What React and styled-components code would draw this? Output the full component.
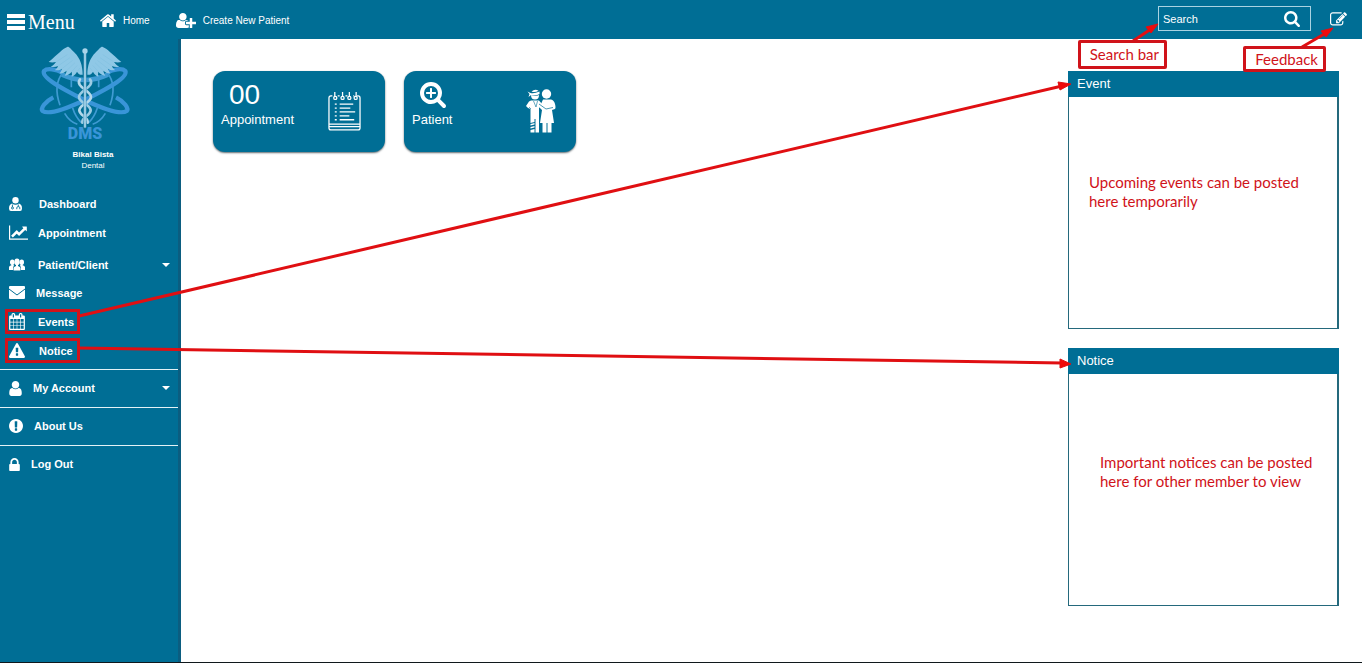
import React from "react";
import styled, { createGlobalStyle } from "styled-components";

const GlobalStyle = createGlobalStyle`
  *, *::before, *::after { box-sizing: border-box; }
  body {
    margin: 0;
    background: #fff;
    font-family: "Liberation Sans", Arial, sans-serif;
  }
`;

const brand = "#006e95";
const brandDark = "#0b5d80";
const red = "#d0131a";

/* ---------- icons ---------- */

const Glyph = styled.svg`
  display: block;
  flex: none;
  fill: currentColor;
`;

const paths = {
  home: "M1472 992v480q0 26-19 45t-45 19h-384v-384h-256v384h-384q-26 0-45-19t-19-45v-480q0-1 .5-3t.5-3l575-474 575 474q1 2 1 6zm223-69l-62 74q-8 9-21 11h-3q-13 0-21-7l-692-577-692 577q-12 8-24 7-13-2-21-11l-62-74q-8-10-7-23.5t11-21.5l719-599q32-26 76-26t76 26l244 204v-195q0-14 9-23t23-9h192q14 0 23 9t9 23v408l219 182q10 8 11 21.5t-7 23.5z",
  edit: "M888 1184l116-116-152-152-116 116v56h96v96h56zm440-720q-16-16-33 1l-350 350q-17 17-1 33t33-1l350-350q17-17 1-33zm80 594v190q0 119-84.5 203.5t-203.5 84.5h-832q-119 0-203.5-84.5t-84.5-203.5v-832q0-119 84.5-203.5t203.5-84.5h832q63 0 117 25 15 7 18 23 3 17-9 29l-49 49q-14 14-32 8-23-6-45-6h-832q-66 0-113 47t-47 113v832q0 66 47 113t113 47h832q66 0 113-47t47-113v-126q0-13 9-22l64-64q15-15 35-7t20 29zm-96-738l288 288-672 672h-288v-288zm444 132l-92 92-288-288 92-92q28-28 68-28t68 28l152 152q28 28 28 68t-28 68z",
  search: "M1216 832q0-185-131.5-316.5t-316.5-131.5-316.5 131.5-131.5 316.5 131.5 316.5 316.5 131.5 316.5-131.5 131.5-316.5zm512 832q0 52-38 90t-90 38q-54 0-90-38l-343-342q-179 124-399 124-143 0-273.5-55.5t-225-150-150-225-55.5-273.5 55.5-273.5 150-225 225-150 273.5-55.5 273.5 55.5 225 150 150 225 55.5 273.5q0 220-124 399l343 343q37 37 37 90z",
  plus: "M1088 800v64q0 13-9.5 22.5t-22.5 9.5h-224v224q0 13-9.5 22.5t-22.5 9.5h-64q-13 0-22.5-9.5t-9.5-22.5v-224h-224q-13 0-22.5-9.5t-9.5-22.5v-64q0-13 9.5-22.5t22.5-9.5h224v-224q0-13 9.5-22.5t22.5-9.5h64q13 0 22.5 9.5t9.5 22.5v224h224q13 0 22.5 9.5t9.5 22.5z",
  user: "M1536 1399q0 109-62.5 187t-150.5 78h-854q-88 0-150.5-78t-62.5-187q0-85 8.5-160.5t31.5-152 58.5-131 94-89 134.5-34.5q131 128 313 128t313-128q76 0 134.5 34.5t94 89 58.5 131 31.5 152 8.5 160.5zm-256-887q0 159-112.5 271.5t-271.5 112.5-271.5-112.5-112.5-271.5 112.5-271.5 271.5-112.5 271.5 112.5 112.5 271.5z",
  about: "M896 128q209 0 385.5 103t279.5 279.5 103 385.5-103 385.5-279.5 279.5-385.5 103-385.5-103-279.5-279.5-103-385.5 103-385.5 279.5-279.5 385.5-103zm128 1247v-190q0-14-9-23.5t-22-9.5h-192q-13 0-23 10t-10 23v190q0 13 10 23t23 10h192q13 0 22-9.5t9-23.5zm-2-344l18-621q0-12-10-18-10-8-24-8h-220q-14 0-24 8-10 6-10 18l17 621q0 10 10 17.5t24 7.5h185q14 0 23.5-7.5t10.5-17.5z",
  warning: "M1024 1375v-190q0-14-9.5-23.5t-22.5-9.5h-192q-13 0-22.5 9.5t-9.5 23.5v190q0 14 9.5 23.5t22.5 9.5h192q13 0 22.5-9.5t9.5-23.5zm-2-374l18-459q0-12-10-19-13-11-24-11h-220q-11 0-24 11-10 7-10 21l17 457q0 10 10 16.5t24 6.5h185q14 0 23.5-6.5t10.5-16.5zm-14-934l768 1408q35 63-2 126-17 29-46.5 46t-63.5 17h-1536q-34 0-63.5-17t-46.5-46q-37-63-2-126l768-1408q17-31 47-49t65-18 65 18 47 49z",
  lock: "M640 768h512v-192q0-106-75-181t-181-75-181 75-75 181v192zm832 96v576q0 40-28 68t-68 28h-960q-40 0-68-28t-28-68v-576q0-40 28-68t68-28h32v-192q0-184 132-316t316-132 316 132 132 316v192h32q40 0 68 28t28 68z",
  chart: "M2048 1536v128h-2048v-1536h128v1408h1920zm-128-1248v435q0 21-19.5 29.5t-35.5-7.5l-121-121-633 633q-10 10-23 10t-23-10l-233-233-416 416-192-192 585-585q10-10 23-10t23 10l233 233 464-464-121-121q-16-16-7.5-35.5t29.5-19.5h435q14 0 23 9t9 23z",
  userPlus: "M704 896q-159 0-271.5-112.5t-112.5-271.5 112.5-271.5 271.5-112.5 271.5 112.5 112.5 271.5-112.5 271.5-271.5 112.5zm960 128h352q13 0 22.5 9.5t9.5 22.5v192q0 13-9.5 22.5t-22.5 9.5h-352v352q0 13-9.5 22.5t-22.5 9.5h-192q-13 0-22.5-9.5t-9.5-22.5v-352h-352q-13 0-22.5-9.5t-9.5-22.5v-192q0-13 9.5-22.5t22.5-9.5h352v-352q0-13 9.5-22.5t22.5-9.5h192q13 0 22.5 9.5t9.5 22.5v352zm-736 224q0 52 38 90t90 38h256v238q-68 50-171 50h-874q-121 0-194-69t-73-190q0-53 3.5-103.5t14-109 26.5-108.5 43-97.5 62-81 85.5-53.5 111.5-20q19 0 39 17 79 61 154.5 91.5t164.5 30.5 164.5-30.5 154.5-91.5q20-17 39-17 132 0 217 96h-223q-52 0-90 38t-38 90v192z",
  calendar: "M192 1664h288v-288h-288v288zm352 0h320v-288h-320v288zm-352-352h288v-320h-288v320zm352 0h320v-320h-320v320zm-352-384h288v-288h-288v288zm736 736h320v-288h-320v288zm-384-736h320v-288h-320v288zm768 736h288v-288h-288v288zm-384-352h320v-320h-320v320zm-352-864v-288q0-13-9.5-22.5t-22.5-9.5h-64q-13 0-22.5 9.5t-9.5 22.5v288q0 13 9.5 22.5t22.5 9.5h64q13 0 22.5-9.5t9.5-22.5zm736 864h288v-320h-288v320zm-384-384h320v-288h-320v288zm384 0h288v-288h-288v288zm32-480v-288q0-13-9.5-22.5t-22.5-9.5h-64q-13 0-22.5 9.5t-9.5 22.5v288q0 13 9.5 22.5t22.5 9.5h64q13 0 22.5-9.5t9.5-22.5zm384-64v1280q0 52-38 90t-90 38h-1408q-52 0-90-38t-38-90v-1280q0-52 38-90t90-38h128v-96q0-66 47-113t113-47h64q66 0 113 47t47 113v96h384v-96q0-66 47-113t113-47h64q66 0 113 47t47 113v96h128q52 0 90 38t38 90z",
};

const Icon = ({ d, box, w, h }) => (
  <Glyph viewBox={box} width={w} height={h} aria-hidden="true">
    <path d={d} />
  </Glyph>
);

const DoctorIcon = () => (
  <Glyph viewBox="0 0 13 14" width="13" height="14" aria-hidden="true">
    <circle cx="6.5" cy="3.2" r="3.2" />
    <path d="M3 6.6Q6.500 9 10 6.600Q13 7.500 13 11.500Q13 14 11 14H2Q0 14 0 11.500Q0 7.500 3 6.600Z" />
    <g fill="none" stroke={brand} strokeWidth="0.9">
      <path d="M3.400 7.500V10M9.300 7.500V9.500M7.800 12.200V10.800Q7.800 9.600 9.300 9.600Q10.800 9.600 10.800 10.800V12.200" />
      <circle cx="3.500" cy="11" r="1" />
    </g>
  </Glyph>
);

const GroupIcon = () => (
  <Glyph viewBox="0 0 16 13" width="16" height="13" aria-hidden="true">
    <ellipse cx="3.300" cy="4.200" rx="2.300" ry="2.700" />
    <ellipse cx="12.700" cy="4.200" rx="2.300" ry="2.700" />
    <path d="M0 12V9.300Q0 8 2.400 7.300V6H4.200V7L5.200 7.500Q4.200 8.300 4.200 9.600V12Z" />
    <path d="M16 12V9.300Q16 8 13.600 7.300V6H11.800V7L10.800 7.500Q11.800 8.300 11.800 9.600V12Z" />
    <ellipse cx="8" cy="3.900" rx="2.600" ry="3.300" />
    <path d="M4.600 12.500V10Q4.600 8.900 7 8.100V6H9V8.100Q11.400 8.900 11.400 10V12.500Z" />
  </Glyph>
);

const EnvelopeIcon = () => (
  <Glyph viewBox="0 0 16 13" width="16" height="13" aria-hidden="true">
    <path d="M1 0H15Q16 0 16 1V12Q16 13 15 13H1Q0 13 0 12V1Q0 0 1 0Z" />
    <path d="M0 3L8 9L16 3" fill="none" stroke={brand} strokeWidth="1" />
  </Glyph>
);

const BarsIcon = () => (
  <Glyph viewBox="0 0 18 16" width="18" height="16" aria-hidden="true">
    <path d="M0 0h18v4H0zM0 6h18v4H0zM0 12h18v4H0z" />
  </Glyph>
);

const NotepadIcon = () => (
  <Glyph viewBox="0 0 34 40" width="33" height="39" aria-hidden="true">
    <g fill="none" stroke="currentColor" strokeWidth="1.300">
      <path d="M4.500 4H3Q1 4 1 6V37Q1 39 3 39H31Q33 39 33 37V6Q33 4 31 4H30M10 4H12M18 4H20M26 4H27" />
      <path d="M1 33H33M1 35.500H33" />
      <path d="M7 0V5M15 0V5M22 0V5M29 0V5" />
      <circle cx="7.500" cy="6" r="1.600" />
      <circle cx="15" cy="6" r="1.600" />
      <circle cx="22" cy="6" r="1.600" />
      <circle cx="28.500" cy="6" r="1.600" />
      <path d="M12 12.500H26M12 16.500H23M12 20.500H28M12 24.500H22M12 28.500H27" />
      <path d="M7 12.500H9M7 16.500H9M7 20.500H9M7 24.500H9M7 28.500H9" />
    </g>
  </Glyph>
);

const CoupleIcon = () => (
  <Glyph viewBox="0 0 30 44" width="30" height="44" aria-hidden="true">
    <path d="M5 6Q5 10.500 9 10.500Q13 10.500 13 6Q9 8 5 6Z" />
    <path d="M1.500 2.500L4.500 4Q8 5 13.500 2.500V5Q9 7.500 5 6L2.500 8L3.500 5Z" />
    <path d="M5.500 2.500Q9 -0.500 12.500 1.800Q9 4 5.500 2.500Z" />
    <path d="M5 11.500H13L16 15L18 17L16 20L13 18V43.500H9.500V30H8.500V33L4.500 34V20L2 19L0 17L3 12.500Z" />
    <path d="M4.500 35L8.500 34V35.500L4.500 36.500ZM4.500 38L8.500 37V38.500L4.500 39.500ZM4.500 41L8.500 40V43.500H4.500Z" />
    <path d="M7.500 12L10 18L11.500 12M5 20L3 18" fill="none" stroke={brand} strokeWidth="0.600" />
    <circle cx="20.500" cy="5" r="4.700" />
    <path d="M17 10.500H25Q28 11 29 15Q30 19 29 20L26 21L28 34H25.500V43.500H21.500V34H20.500V43.500H16.500V34H14L16 21L13 18L15 15Z" />
    <path d="M13 15L20 20L27 18.500" fill="none" stroke={brand} strokeWidth="0.700" />
  </Glyph>
);

const wing =
  "M158 104C158 76 150 54 134 38C124 28 118 20 113 20C98 26 84 42 56 66C64 68 70 68 78 66C72 74 68 78 62 80C70 82 78 81 84 78C82 85 78 88 74 90C82 92 90 90 96 86C94 93 92 97 88 100C97 101 104 97 110 92C109 98 107 103 104 107C114 105 120 101 125 95C126 101 126 105 125 110C134 106 138 101 141 95C146 103 152 106 158 104Z";

const ring =
  "M70 172C46 184 30 206 38 213C56 226 118 202 165 180C220 152 296 114 286 93C276 83 250 88 230 98";

const DmsLogo = () => (
  <Glyph viewBox="0 0 330 315" width="110" height="105" role="img" aria-label="DMS">
    <g fill="none" stroke="#3f9bd3" strokeWidth="5">
      <path d="M99 97Q68 135 90 196M231 97Q262 135 240 196" />
      <path d="M124 105V142M206 105V142" />
      <path d="M96 104Q165 136 234 104" strokeWidth="14" />
      <path d="M104 220Q118 244 142 253M226 220Q212 244 188 253" />
      <path d="M128 204Q136 230 154 248M202 204Q194 230 176 248" />
    </g>
    <g fill="none" stroke="#3995d8" strokeWidth="13">
      <path d={ring} />
      <path d={ring} transform="translate(328 0) scale(-1 1)" />
    </g>
    <path d={wing} fill="#8fc8e6" />
    <path d={wing} fill="#8fc8e6" transform="translate(330 0) scale(-1 1)" />
    <g fill="none" stroke="#7fbedf" strokeWidth="1.500">
      <path d="M78 66L112 44M84 78L120 53M96 86L128 61M110 92L135 68M125 95L142 76M141 95L150 84" />
      <path d="M252 66L218 44M246 78L210 53M234 86L202 61M220 92L195 68M205 95L188 76M189 95L180 84" />
    </g>
    <text x="165" y="297" textAnchor="middle" fontFamily="Roboto, Liberation Sans, sans-serif" fontWeight="900" fontSize="48" fill="#3995d8">DMS</text>
    <g fill="none" strokeLinecap="round">
      <path d="M150 118C134 140 180 150 183 170C184 190 148 192 148 212C150 228 176 230 173 248" stroke="#b4d8ea" strokeWidth="8" />
      <path d="M180 118C196 140 150 150 147 170C146 190 182 192 182 212C180 228 154 230 157 248" stroke="#9ccce4" strokeWidth="8" />
      <path d="M165 36V260" stroke="#4796bd" strokeWidth="9" />
      <path d="M165 36V260" stroke="#a9d4ea" strokeWidth="5" />
    </g>
    <circle cx="165" cy="33" r="8" fill="#a9d4ea" />
  </Glyph>
);

/* ---------- layout ---------- */

const Page = styled.div`
  position: relative;
  display: flex;
  flex-direction: column;
  min-height: 100vh;
  border-bottom: 1px solid #10181c;
`;

const TopBar = styled.header`
  display: flex;
  align-items: center;
  height: 39px;
  padding: 0 15px 0 7px;
  background: ${brand};
  color: #fff;
`;

const MenuButton = styled.button`
  display: flex;
  align-items: center;
  gap: 3px;
  width: 93px;
  height: 39px;
  padding: 5px 0 0;
  border: 0;
  background: none;
  color: inherit;
  font: 20px/24px "Liberation Serif", "Times New Roman", serif;
`;

const TopLinks = styled.nav`
  display: flex;
  align-items: center;
  gap: 26px;
  flex: 1;
`;

const TopLink = styled.a`
  display: flex;
  align-items: center;
  gap: 7px;
  color: inherit;
  font-size: 10px;
  line-height: 14px;
  padding-top: 2px;
  text-decoration: none;
`;

const SearchBox = styled.form`
  display: flex;
  align-items: center;
  width: 153px;
  height: 25px;
  margin: 0 19px 2px 0;
  padding: 0 10px 0 4px;
  border: 1px solid #a9d3e2;
`;

const SearchInput = styled.input`
  flex: 1;
  min-width: 0;
  padding: 0;
  border: 0;
  outline: 0;
  background: none;
  color: #fff;
  font: 11px/16px "Liberation Sans", Arial, sans-serif;
  &::placeholder { color: #fff; opacity: 1; }
`;

const IconButton = styled.button`
  padding: 0;
  border: 0;
  background: none;
  color: inherit;
`;

const Content = styled.div`
  display: flex;
  flex: 1;
`;

const Sidebar = styled.aside`
  flex: none;
  width: 181px;
  border-right: 3px solid ${brandDark};
  background: ${brand};
  color: #fff;
`;

const Profile = styled.div`
  display: flex;
  flex-direction: column;
  padding: 1px 0 18px 30px;
`;

const ProfileText = styled.div`
  width: 126px;
  padding-top: 4px;
  font-size: 8px;
  line-height: 11px;
  text-align: center;
`;

const NavList = styled.ul`
  margin: 0;
  padding: 0 0 4px;
  list-style: none;
`;

const NavLink = styled.a`
  position: relative;
  display: flex;
  align-items: center;
  height: ${(p) => p.$height || 29}px;
  padding: ${(p) => p.$lead || 0}px 8px 0 9px;
  color: #fff;
  font-size: 11px;
  font-weight: 700;
  text-decoration: none;
  ${(p) =>
    p.$marked &&
    `&::after {
      content: "";
      position: absolute;
      left: 5px;
      top: 2px;
      width: 75px;
      height: 25px;
      border: 3px solid ${red};
    }`}
`;

const IconSlot = styled.span`
  width: ${(p) => p.$width}px;
  margin-right: 11px;
`;

const Caret = styled.span`
  margin-left: auto;
  border: 4px solid transparent;
  border-top-color: #fff;
  border-bottom: 0;
`;

const AccountItem = styled.li`
  height: 38px;
  border-top: 1px solid #e4f2f6;
`;

const Main = styled.main`
  display: flex;
  flex: 1;
  justify-content: space-between;
  align-items: flex-start;
  gap: 18px;
  padding: 32px 23px 56px 32px;
`;

const Cards = styled.div`
  display: flex;
  flex-wrap: wrap;
  gap: 19px;
`;

const Card = styled.a`
  display: flex;
  justify-content: space-between;
  width: 172px;
  height: 81px;
  padding: 8px ${(p) => p.$inset}px 0 8px;
  border-radius: 12px;
  background: ${brand};
  box-shadow: 0 1px 2px #5f6b70;
  color: #fff;
  text-decoration: none;
`;

const CardInfo = styled.div`
  display: flex;
  flex-direction: column;
`;

const CardValue = styled.div`
  display: flex;
  align-items: center;
  height: 32px;
  padding-left: 8px;
  font-size: 28px;
`;

const CardLabel = styled.div`
  font-size: 13px;
  line-height: 17px;
`;

const CardArt = styled.div`
  display: flex;
  align-items: center;
  height: 64px;
`;

const Panels = styled.div`
  display: flex;
  flex: none;
  flex-direction: column;
  gap: 19px;
  width: 271px;
`;

const Panel = styled.section`
  min-height: 258px;
  border: solid #24697c;
  border-width: 0 2px 1px 1px;
`;

const PanelTitle = styled.h2`
  margin: 0 -2px 0 -1px;
  padding: 0 9px;
  background: ${brand};
  color: #fff;
  font-size: 13px;
  font-weight: 400;
  line-height: 26px;
`;

const PanelNote = styled.p`
  margin: 0;
  padding: ${(p) => p.$top}px 20px 0 ${(p) => p.$indent}px;
  color: ${red};
  font: 15px/19px Lato, sans-serif;
`;

/* ---------- annotations ---------- */

const Callout = styled.div`
  position: absolute;
  top: ${(p) => p.$top}px;
  right: ${(p) => p.$right}px;
  padding: 0 5px 0 9px;
  border: 3px solid ${red};
  border-radius: 2px;
  background: #fff;
  color: ${red};
  font: 15px/${(p) => p.$line}px Lato, sans-serif;
`;

const LongArrows = styled.svg`
  position: absolute;
  top: 70px;
  left: 78px;
  width: calc(100% - 368px);
  height: 310px;
  pointer-events: none;
`;

const ShortArrows = styled.svg`
  position: absolute;
  top: 20px;
  right: 22px;
  pointer-events: none;
`;

const sq = "0 0 1792 1792";

const navItems = [
  { label: "Dashboard", slot: 19, icon: <DoctorIcon /> },
  { label: "Appointment", slot: 18, icon: <Icon d={paths.chart} box="0 128 2048 1536" w="19" h="15" /> },
  { label: "Patient/Client", slot: 18, icon: <GroupIcon />, height: 31, lead: 4, caret: true },
  { label: "Message", slot: 16, icon: <EnvelopeIcon /> },
  { label: "Events", slot: 18, icon: <Icon d={paths.calendar} box="64 0 1664 1792" w="16" h="17" />, marked: true },
  { label: "Notice", slot: 19, icon: <Icon d={paths.warning} box="0 0 1792 1664" w="16" h="15" />, marked: true },
];

const accountItems = [
  { label: "My Account", slot: 13, icon: <Icon d={paths.user} box="256 128 1280 1536" w="13" h="15" />, caret: true },
  { label: "About Us", slot: 14, icon: <Icon d={paths.about} box="128 128 1536 1536" w="14" h="14" /> },
  { label: "Log Out", slot: 11, icon: <Icon d={paths.lock} box="320 128 1152 1408" w="11" h="13" /> },
];

const NavEntry = ({ item, height }) => (
  <NavLink href="#" $height={height || item.height} $lead={item.lead} $marked={item.marked}>
    <IconSlot $width={item.slot}>{item.icon}</IconSlot>
    {item.label}
    {item.caret && <Caret />}
  </NavLink>
);

export default function App() {
  return (
    <>
      <GlobalStyle />
      <Page>
        <TopBar>
          <MenuButton type="button">
            <BarsIcon />
            Menu
          </MenuButton>
          <TopLinks>
            <TopLink href="#">
              <Icon d={paths.home} box="89 240 1614 1296" w="16" h="13" />
              Home
            </TopLink>
            <TopLink href="#">
              <Icon d={paths.userPlus} box="0 128 2048 1536" w="20" h="15" />
              Create New Patient
            </TopLink>
          </TopLinks>
          <SearchBox role="search">
            <SearchInput type="text" placeholder="Search" aria-label="Search" />
            <IconButton type="button" aria-label="Run search">
              <Icon d={paths.search} box="64 128 1664 1664" w="16" h="16" />
            </IconButton>
          </SearchBox>
          <IconButton type="button" aria-label="Feedback">
            <Icon d={paths.edit} box={sq} w="17" h="17" />
          </IconButton>
        </TopBar>

        <Content>
          <Sidebar>
            <Profile>
              <DmsLogo />
              <ProfileText>
                <strong>Bikal Bista</strong>
                <br />
                Dental
              </ProfileText>
            </Profile>
            <nav>
              <NavList>
                {navItems.map((item) => (
                  <li key={item.label}>
                    <NavEntry item={item} />
                  </li>
                ))}
              </NavList>
              <NavList>
                {accountItems.map((item) => (
                  <AccountItem key={item.label}>
                    <NavEntry item={item} height={36} />
                  </AccountItem>
                ))}
              </NavList>
            </nav>
          </Sidebar>

          <Main>
            <Cards>
              <Card href="#" $inset={24}>
                <CardInfo>
                  <CardValue>00</CardValue>
                  <CardLabel>Appointment</CardLabel>
                </CardInfo>
                <CardArt>
                  <NotepadIcon />
                </CardArt>
              </Card>
              <Card href="#" $inset={20}>
                <CardInfo>
                  <CardValue>
                    <Icon d={paths.search + paths.plus} box="64 128 1664 1664" w="26" h="26" />
                  </CardValue>
                  <CardLabel>Patient</CardLabel>
                </CardInfo>
                <CardArt>
                  <CoupleIcon />
                </CardArt>
              </Card>
            </Cards>

            <Panels>
              <Panel>
                <PanelTitle>Event</PanelTitle>
                <PanelNote $top={76} $indent={20}>Upcoming events can be posted here temporarily</PanelNote>
              </Panel>
              <Panel>
                <PanelTitle>Notice</PanelTitle>
                <PanelNote $top={79} $indent={31}>Important notices can be posted here for other member to view</PanelNote>
              </Panel>
            </Panels>
          </Main>
        </Content>

        <LongArrows viewBox="0 0 994 310" preserveAspectRatio="none" aria-hidden="true">
          <g stroke="#e00f12" strokeWidth="3" fill="#f00a0a">
            <path d="M1 246L984 16" />
            <path d="M980 12L993 14L982 20Z" strokeWidth="1" />
            <path d="M0 278L984 293" />
            <path d="M982 289L993 294L982 298Z" strokeWidth="1" />
          </g>
        </LongArrows>
        <ShortArrows width="210" height="30" viewBox="1130 20 210 30" aria-hidden="true">
          <g stroke="#e00f12" strokeWidth="3" fill="#f00a0a">
            <path d="M1133 41L1151 29" />
            <path d="M1146 27L1158 24L1151 33Z" strokeWidth="1" />
            <path d="M1302 47L1326 33" />
            <path d="M1321 31L1333 28L1326 37Z" strokeWidth="1" />
          </g>
        </ShortArrows>
        <Callout $top={40} $right={195} $line={23}>Search bar</Callout>
        <Callout $top={46} $right={36} $line={20}>Feedback</Callout>
      </Page>
    </>
  );
}
